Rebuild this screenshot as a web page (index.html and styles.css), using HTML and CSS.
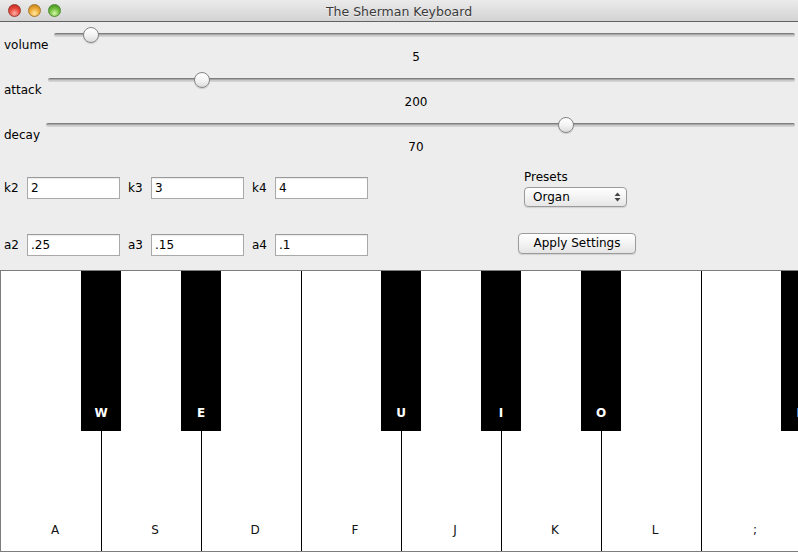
FILE: index.html
```html
<!DOCTYPE html>
<html>
<head>
<meta charset="utf-8">
<title>The Sherman Keyboard</title>
<link rel="stylesheet" href="styles.css">
</head>
<body>
<div class="window">
  <div class="titlebar">
    <div class="lights">
      <span class="light red"></span>
      <span class="light yellow"></span>
      <span class="light green"></span>
    </div>
    <div class="title">The Sherman Keyboard</div>
    <div></div>
  </div>

  <div class="sliders">
    <div class="slider-row">
      <div class="slider-top">
        <span class="slider-label">volume</span>
        <div class="slider"><div class="track"></div><div class="thumb" style="--v:0.039"></div></div>
      </div>
      <div class="slider-value">5</div>
    </div>
    <div class="slider-row">
      <div class="slider-top">
        <span class="slider-label">attack</span>
        <div class="slider"><div class="track"></div><div class="thumb" style="--v:0.2"></div></div>
      </div>
      <div class="slider-value">200</div>
    </div>
    <div class="slider-row">
      <div class="slider-top">
        <span class="slider-label">decay</span>
        <div class="slider"><div class="track"></div><div class="thumb" style="--v:0.698"></div></div>
      </div>
      <div class="slider-value">70</div>
    </div>
  </div>

  <div class="params">
    <div class="fields">
      <div class="field"><label>k2</label><input type="text" value="2"></div>
      <div class="field"><label>k3</label><input type="text" value="3"></div>
      <div class="field"><label>k4</label><input type="text" value="4"></div>
      <div class="field"><label>a2</label><input type="text" value=".25"></div>
      <div class="field"><label>a3</label><input type="text" value=".15"></div>
      <div class="field"><label>a4</label><input type="text" value=".1"></div>
    </div>
    <div class="presets-col">
      <div class="presets-label">Presets</div>
      <div class="select">
        <span>Organ</span>
        <svg class="arrows" width="7" height="10" viewBox="0 0 7 10">
          <path d="M0.5 4 L3.5 0.5 L6.5 4 Z" fill="#444"/>
          <path d="M0.5 6 L3.5 9.5 L6.5 6 Z" fill="#444"/>
        </svg>
      </div>
      <button class="apply">Apply Settings</button>
    </div>
  </div>

  <div class="keyboard">
    <div class="white"><span>A</span><div class="black"><span>W</span></div></div>
    <div class="white"><span>S</span><div class="black"><span>E</span></div></div>
    <div class="white"><span>D</span></div>
    <div class="white"><span>F</span><div class="black"><span>U</span></div></div>
    <div class="white"><span>J</span><div class="black"><span>I</span></div></div>
    <div class="white"><span>K</span><div class="black"><span>O</span></div></div>
    <div class="white"><span>L</span></div>
    <div class="white"><span>;</span><div class="black"><span>P</span></div></div>
  </div>
</div>
</body>
</html>
```

FILE: styles.css
```css
html, body {
  margin: 0;
  padding: 0;
}
body {
  width: 798px;
  height: 552px;
  overflow: hidden;
  background: #ededed;
  font-family: "DejaVu Sans", "Liberation Sans", sans-serif;
  font-size: 12px;
  color: #000;
}
.window {
  width: 798px;
  height: 552px;
  overflow: hidden;
  background: #ededed;
}

/* title bar */
.titlebar {
  height: 21px;
  border-bottom: 1px solid #626262;
  background: linear-gradient(#ebebeb, #d3d3d3);
  display: grid;
  grid-template-columns: 1fr auto 1fr;
  align-items: center;
}
.lights {
  display: flex;
  gap: 7px;
  padding-left: 8px;
}
.light {
  width: 13px;
  height: 13px;
  border-radius: 50%;
  box-sizing: border-box;
}
.red {
  background: radial-gradient(circle at 50% 75%, #ffb0a6 0%, #e8483c 50%, #b2231a 100%);
  border: 1px solid #9c3a32;
}
.yellow {
  background: radial-gradient(circle at 50% 75%, #ffe9a0 0%, #eda935 50%, #b07212 100%);
  border: 1px solid #a47a30;
}
.green {
  background: radial-gradient(circle at 50% 75%, #d4f8a6 0%, #6fbb3c 50%, #378318 100%);
  border: 1px solid #4f8a33;
}
.title {
  font-size: 12.5px;
  color: #3a3a3a;
  text-shadow: 0 1px 0 rgba(255,255,255,0.6);
  padding-top: 1px;
}

/* sliders */
.slider-row {
  height: 45px;
}
.slider-top {
  display: flex;
  height: 31px;
}
.slider-label {
  align-self: flex-end;
  line-height: 15px;
  padding-left: 4px;
}
.slider {
  flex: 1;
  position: relative;
  height: 26px;
  margin-left: 6px;
  margin-right: 3px;
}
.track {
  position: absolute;
  left: 0;
  right: 0;
  top: 11px;
  height: 4px;
  border-radius: 2px;
  background: linear-gradient(#6f6f6f 0, #8d8d8d 25%, #c4c4c4 50%, #d9d9d9 100%);
}
.thumb {
  position: absolute;
  top: 5px;
  left: calc((100% - 16px) * var(--v));
  width: 16px;
  height: 16px;
  box-sizing: border-box;
  border-radius: 50%;
  border: 1px solid #858585;
  background: linear-gradient(#ffffff, #f4f4f4 50%, #dcdcdc);
  box-shadow: 0 1px 1px rgba(0,0,0,0.15);
}
.slider-value {
  margin-top: -3px;
  line-height: 14px;
  text-align: center;
  padding-left: 34px;
}

/* params */
.params {
  display: flex;
  height: 100px;
  padding-top: 13px;
}
.fields {
  display: grid;
  grid-template-columns: repeat(3, auto);
  column-gap: 8px;
  row-gap: 35px;
  padding-left: 4px;
  margin-top: 7px;
  align-self: flex-start;
}
.field {
  display: flex;
  align-items: center;
}
.field label {
  width: 23px;
}
.field input {
  width: 93px;
  height: 22px;
  box-sizing: border-box;
  margin: 0;
  border: 1px solid #a9a9a9;
  border-top-color: #9a9a9a;
  padding: 0 3px;
  font-family: "DejaVu Sans", "Liberation Sans", sans-serif;
  font-size: 12px;
  color: #000;
  background: #fff;
  box-shadow: inset 0 1px 1px rgba(0,0,0,0.08);
  outline: none;
}
.presets-col {
  margin-left: 150px;
  width: 118px;
  display: flex;
  flex-direction: column;
}
.presets-label {
  padding-left: 6px;
  line-height: 14px;
}
.select {
  margin-top: 3px;
  margin-left: 6px;
  width: 103px;
  height: 20px;
  box-sizing: border-box;
  border: 1px solid #9b9b9b;
  border-radius: 4px;
  background: linear-gradient(#ffffff, #f3f3f3 50%, #e6e6e6);
  box-shadow: 0 1px 1px rgba(0,0,0,0.12);
  display: flex;
  align-items: center;
  justify-content: space-between;
  padding: 0 5px 0 8px;
}
.arrows {
  display: block;
}
.apply {
  margin-top: 26px;
  width: 118px;
  height: 21px;
  box-sizing: border-box;
  border: 1px solid #9b9b9b;
  border-radius: 4px;
  background: linear-gradient(#ffffff, #f3f3f3 50%, #e4e4e4);
  box-shadow: 0 1px 1px rgba(0,0,0,0.12);
  font-family: "DejaVu Sans", "Liberation Sans", sans-serif;
  font-size: 12px;
  color: #000;
  padding: 0;
  line-height: 19px;
}

/* keyboard */
.keyboard {
  height: 280px;
  border-top: 1px solid #7d7d7d;
  border-bottom: 1px solid #7d7d7d;
  border-left: 1px solid #7d7d7d;
  padding-left: 1px;
  background: #fff;
  display: flex;
  overflow: hidden;
  font-size: 12px;
}
.white {
  position: relative;
  flex: 0 0 100px;
  box-sizing: border-box;
  border-right: 1px solid #000;
  display: flex;
  align-items: flex-end;
  justify-content: center;
  padding-left: 7px;
  padding-bottom: 14px;
  line-height: 14px;
  color: #111;
}
.black {
  position: absolute;
  z-index: 1;
  top: 0;
  right: -20px;
  width: 40px;
  height: 160px;
  background: #000;
  color: #fff;
  font-weight: bold;
  display: flex;
  align-items: flex-end;
  justify-content: center;
  padding-bottom: 11px;
  box-sizing: border-box;
  line-height: 14px;
}
```
